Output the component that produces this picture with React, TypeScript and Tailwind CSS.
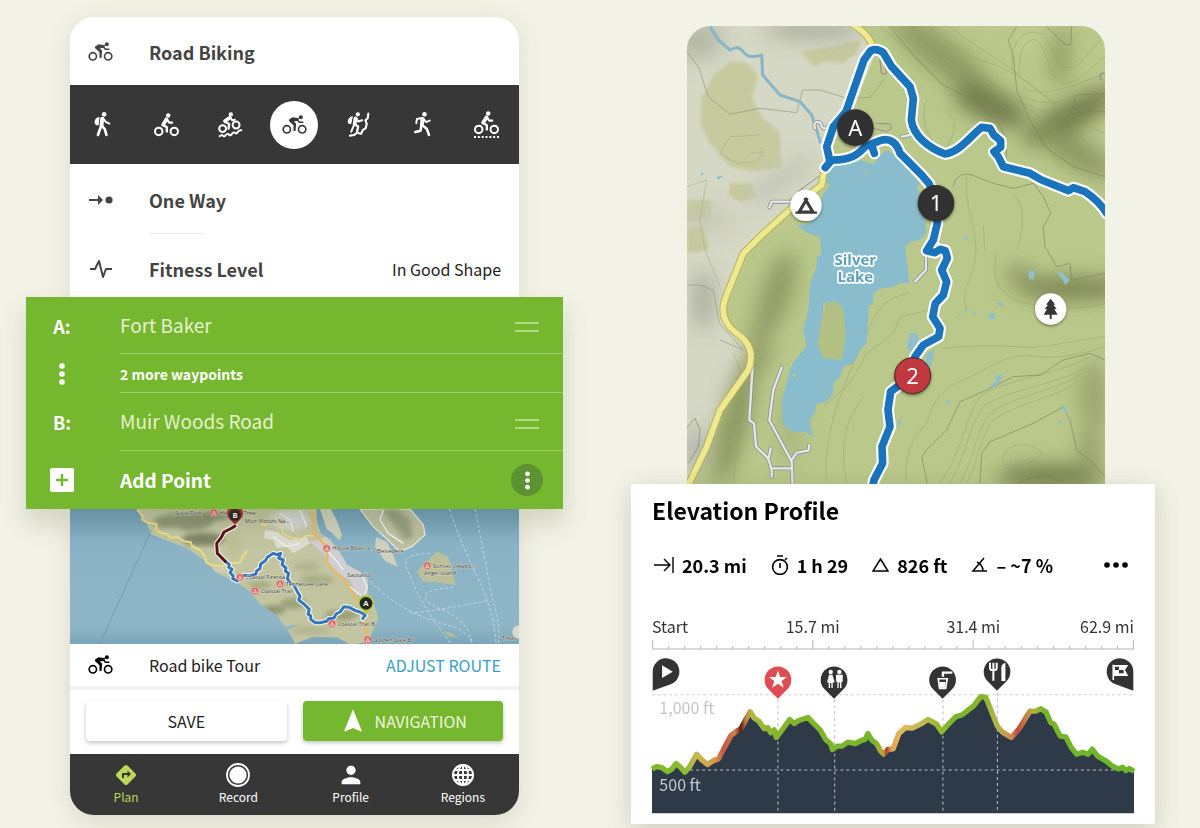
import type { ReactNode } from 'react'
import { MdDirections, MdNavigation, MdPerson } from 'react-icons/md'

interface IconProps {
  className?: string
}

/* ---------- Activity icons ---------- */

function RoadBikeIcon({ className = '' }: IconProps) {
  return (
    <svg
      viewBox="0 0 74 60"
      className={`w-[25px] h-5 ${className}`}
      fill="none"
      stroke="currentColor"
      aria-hidden="true"
    >
      <circle cx="14" cy="43" r="11" strokeWidth="5" />
      <circle cx="60" cy="43" r="11" strokeWidth="5" />
      <circle cx="56" cy="7" r="6" fill="currentColor" stroke="none" />
      <path d="M20 14 L31 7 L51 10 L48 18 L35 19 L42 26 L40 48 L34 48 L34 31 L21 19 Z" fill="currentColor" stroke="none" />
      <path d="M46 15 L52 22 H62" strokeWidth="4.5" strokeLinecap="round" strokeLinejoin="round" />
    </svg>
  )
}

function CyclistIcon({ className = '' }: IconProps) {
  return (
    <svg
      viewBox="0 0 74 70"
      className={`w-[25px] h-6 ${className}`}
      fill="none"
      stroke="currentColor"
      strokeLinecap="round"
      strokeLinejoin="round"
      aria-hidden="true"
    >
      <circle cx="14" cy="54" r="11" strokeWidth="6" />
      <circle cx="60" cy="54" r="11" strokeWidth="6" />
      <circle cx="42" cy="7" r="6.5" fill="currentColor" stroke="none" />
      <path d="M37 18 L27 34" strokeWidth="11" />
      <path d="M27 35 L38 42 V54" strokeWidth="7" />
      <path d="M39 19 L45 28 H54" strokeWidth="6" />
    </svg>
  )
}

function MountainBikeIcon() {
  return (
    <svg
      viewBox="0 0 76 78"
      className="h-[26px] w-[25px]"
      fill="none"
      stroke="currentColor"
      strokeLinecap="round"
      strokeLinejoin="round"
      aria-hidden="true"
    >
      <circle cx="14" cy="50" r="10.5" strokeWidth="6" />
      <circle cx="55" cy="39" r="10.5" strokeWidth="6" />
      <circle cx="39" cy="7" r="6.5" fill="currentColor" stroke="none" />
      <path d="M36 17 L21 27" strokeWidth="11" />
      <path d="M21 29 L34 36 L32 50" strokeWidth="7" />
      <path d="M38 16 L43 25 L51 23" strokeWidth="6" />
      <path d="M5 73 q6 -6 10 -1 q4 4 9 -3 q6 -6 10 0 q4 3 9 -4 q5 -6 9 -2 q5 4 9 -4 q4 -5 10 -4" strokeWidth="6" />
    </svg>
  )
}

function HikerIcon() {
  return (
    <svg
      viewBox="0 0 52 76"
      className="h-[25px] w-[17px]"
      fill="none"
      stroke="currentColor"
      strokeLinecap="round"
      strokeLinejoin="round"
      aria-hidden="true"
    >
      <circle cx="31" cy="7" r="7" fill="currentColor" stroke="none" />
      <path d="M17 16 C8 15 2 22 2 31 C2 39 8 42 14 40 Z" fill="currentColor" stroke="none" />
      <path d="M25 20 L23 41" strokeWidth="12" />
      <path d="M22 42 L12 70" strokeWidth="8" />
      <path d="M24 42 L33 52 L38 70" strokeWidth="8" />
      <path d="M28 19 L35 29 L47 35" strokeWidth="6" />
    </svg>
  )
}

function ClimberIcon() {
  return (
    <svg
      viewBox="0 0 70 76"
      className="h-[25px] w-[23px]"
      fill="none"
      stroke="currentColor"
      strokeLinecap="round"
      strokeLinejoin="round"
      aria-hidden="true"
    >
      <circle cx="33" cy="7" r="6.5" fill="currentColor" stroke="none" />
      <path d="M18 13 C9 13 3 20 2 31 C5 37 9 37 13 36 Z" fill="currentColor" stroke="none" />
      <path d="M26 19 L23 38" strokeWidth="11" />
      <path d="M22 38 L13 60" strokeWidth="6" />
      <path d="M24 38 L34 44 L31 58" strokeWidth="7" />
      <path d="M29 20 L34 29 L46 25" strokeWidth="6" />
      <path d="M65 5 L63 19 L56 25 L60 36 L57 49 L48 55 L43 66 L30 63 L22 70 L9 72" strokeWidth="6.5" />
    </svg>
  )
}

function RunnerIcon() {
  return (
    <svg
      viewBox="0 0 52 76"
      className="h-[25px] w-[17px]"
      fill="none"
      stroke="currentColor"
      strokeLinecap="round"
      strokeLinejoin="round"
      aria-hidden="true"
    >
      <circle cx="32" cy="7" r="7" fill="currentColor" stroke="none" />
      <path d="M26 21 L24 40" strokeWidth="12" />
      <path d="M24 18 L9 21 L7 34" strokeWidth="6" />
      <path d="M29 21 L37 31 L48 26" strokeWidth="6" />
      <path d="M26 41 L39 51 L46 70" strokeWidth="7.5" />
      <path d="M22 43 L20 57 L4 61" strokeWidth="7.5" />
    </svg>
  )
}

function GravelBikeIcon() {
  return (
    <span className="flex flex-col items-center gap-px">
      <CyclistIcon />
      <svg viewBox="0 0 75 6" className="h-[2px] w-[25px]" aria-hidden="true">
        <path d="M0 3 H75" stroke="currentColor" strokeWidth="6" strokeDasharray="6 5.5" />
      </svg>
    </span>
  )
}

function GlobeIcon() {
  return (
    <svg viewBox="0 0 24 24" className="size-6" fill="none" stroke="currentColor" strokeWidth="2" aria-hidden="true">
      <circle cx="12" cy="12" r="10" />
      <ellipse cx="12" cy="12" rx="5" ry="10" />
      <path d="M12 2 V22 M2 12 H22 M4 7 H20 M4 17 H20" />
    </svg>
  )
}

function DragHandle({ label }: { label: string }) {
  return (
    <button type="button" aria-label={label} className="flex w-6 flex-col gap-[6px] pt-1">
      <span className="h-[2px] w-full bg-[#b4d881]" />
      <span className="h-[2px] w-full bg-[#b4d881]" />
    </button>
  )
}

function Dots({ className = '' }: IconProps) {
  return (
    <svg viewBox="0 0 6 22" className={className} fill="currentColor" aria-hidden="true">
      <circle cx="3" cy="3" r="2.8" />
      <circle cx="3" cy="11" r="2.8" />
      <circle cx="3" cy="19" r="2.8" />
    </svg>
  )
}

/* ---------- Route preview map ---------- */

const previewPois = [
  { x: 462, y: 38, label: 'Heritage Tree' },
  { x: 540, y: 232, label: 'Coastal Fireroa' },
  { x: 585, y: 273, label: 'Coastal Trail' },
  { x: 660, y: 252, label: 'Tennessee Valle' },
  { x: 800, y: 145, label: 'House Boats S.' },
  { x: 816, y: 371, label: 'Coastal Trail B' },
  { x: 923, y: 419, label: 'Golden Gate Br' },
  { x: 1102, y: 197, label: 'Sunset Viewpo...' },
]

const previewRoute =
  'M496 184 L508 194 L506 202 L516 208 L510 218 L520 228 L518 236 L532 243 L540 232 L552 226 L572 227 L588 222 L590 212 L600 206 L602 192 L616 182 L622 172 L640 160 L650 164 L662 160 L656 174 L670 180 L666 194 L678 204 L676 214 L686 220 L682 236 L690 248 L702 256 L712 275 L720 288 L716 300 L732 312 L748 328 L744 342 L752 348 L752 358 L766 368 L780 368 L800 364 L806 356 L822 354 L828 342 L840 336 L852 320 L868 322 L886 332 L900 336 L916 346 L908 356'

function PreviewMap() {
  return (
    <svg
      viewBox="30 27 1347 405"
      className="block h-auto w-full font-['Open_Sans',sans-serif]"
      role="img"
      aria-label="Route from Fort Baker to Muir Woods Road"
    >
      <defs>
        <linearGradient id="sea" x1="0" y1="0" x2="0" y2="1">
          <stop offset="0" stopColor="#6f9fb8" />
          <stop offset="0.25" stopColor="#8ab3c5" />
          <stop offset="0.85" stopColor="#8fb6c6" />
          <stop offset="1" stopColor="#7ba6b8" />
        </linearGradient>
        <filter id="soft">
          <feGaussianBlur stdDeviation="8" />
        </filter>
        <clipPath id="mainland">
          <path d="M228 27 L262 72 L272 102 L310 118 L382 145 L430 180 L470 218 L530 246 L572 276 L600 312 L650 346 L680 385 L706 432 L720 425 L760 410 L830 412 L872 434 L925 425 L955 355 L940 305 L922 285 L924 240 L900 215 L862 195 L836 150 L810 118 L782 100 L770 60 L770 27 Z" />
        </clipPath>
      </defs>
      <rect x="30" y="27" width="1347" height="407" fill="url(#sea)" />
      <g clipPath="url(#mainland)">
        <rect x="220" y="20" width="750" height="420" fill="#c2c5a0" />
        <g filter="url(#soft)">
          <ellipse cx="370" cy="66" rx="90" ry="26" fill="#8f9678" />
          <ellipse cx="330" cy="92" rx="40" ry="8" fill="#c3c6a6" />
          <ellipse cx="430" cy="118" rx="64" ry="20" fill="#7f8769" />
          <ellipse cx="440" cy="50" rx="70" ry="14" fill="#8b9272" />
          <ellipse cx="520" cy="130" rx="24" ry="44" fill="#bdc197" />
          <ellipse cx="700" cy="310" rx="40" ry="16" fill="#9ca07a" />
          <ellipse cx="640" cy="330" rx="36" ry="14" fill="#8f9572" />
          <ellipse cx="600" cy="255" rx="34" ry="10" fill="#a3a880" />
          <ellipse cx="845" cy="345" rx="50" ry="16" fill="#9ba078" />
          <ellipse cx="770" cy="240" rx="50" ry="16" fill="#a9ae85" />
          <ellipse cx="740" cy="200" rx="40" ry="14" fill="#b1b58c" />
          <ellipse cx="750" cy="392" rx="60" ry="10" fill="#b0b38e" />
          <ellipse cx="690" cy="60" rx="60" ry="30" fill="#d3d6cf" />
          <ellipse cx="480" cy="208" rx="30" ry="9" fill="#cfd0bd" />
        </g>
        <path d="M615 90 L650 95 L690 120 L740 110 L750 130 L700 160 L680 140 L650 145 L640 120 L612 115 Z" fill="#dcdcd0" />
        <path d="M750 125 L800 110 L850 170 L920 215 L925 285 L890 285 L870 240 L820 210 L790 160 Z" fill="#cfced3" />
        <path d="M650 385 L720 372 L680 392 Z" fill="#8fb6c6" />
      </g>
      {/* Peninsulas and islands */}
      <path d="M780 27 L812 27 L830 60 L846 105 L838 122 L818 100 L800 88 Z" fill="#cfd1bc" />
      <path d="M900 27 L1050 27 L1090 75 L1095 105 L1055 140 L1020 155 L975 112 L940 80 Z" fill="#bdc1a4" stroke="#e3e5dc" strokeWidth="4" />
      <path d="M965 27 L1010 27 L1050 60 L1060 110 L1035 120 Z" fill="#989f80" filter="url(#soft)" />
      <path d="M948 112 L980 125 L1000 165 L1012 200 L975 182 L945 140 Z" fill="#cfd1bc" />
      <path d="M1130 155 L1165 170 L1178 215 L1188 256 L1140 248 L1090 245 L1070 215 L1095 190 Z" fill="#bcc09a" />
      <path d="M1155 393 l20 6 l14 14 l-24 -5 Z" fill="#b7bc9b" />
      <circle cx="1377" cy="396" r="20" fill="#d9d9cf" />
      {/* Ferry lines */}
      <g fill="none" stroke="#c2dbe6" strokeWidth="3" strokeDasharray="10 6" opacity="0.85">
        <path d="M1168 27 C1200 120 1230 190 1262 250 C1290 320 1305 370 1308 432" />
        <path d="M1245 27 C1262 110 1280 210 1296 290 C1315 350 1318 390 1316 432" />
        <path d="M1110 160 C1020 165 1030 180 1055 240 C1090 330 1140 380 1172 432" />
        <path d="M930 245 C1000 310 1060 350 1180 380 C1215 395 1230 410 1238 432" />
        <path d="M1180 262 C1060 270 1080 305 1160 335 C1220 365 1230 400 1236 425" />
        <path d="M1050 340 C1150 330 1230 310 1285 303" />
      </g>
      <path d="M275 88 L118 434" stroke="#6f909d" strokeWidth="2" />
      {/* Roads */}
      <g fill="none" strokeLinejoin="round">
        <path d="M232 30 L248 48 L246 58 L262 68 L290 72 L288 88 L304 100 L322 102 L332 114 L350 110 L372 124 L392 126 L396 138 L420 150 L434 168 L440 188 L456 196 L490 198 L510 190 L540 188 L548 170 L562 152" stroke="#e8dc88" strokeWidth="6" />
        <path d="M600 72 L620 76 L624 64 L645 68 L665 70 L668 100 L690 112 L720 118 L742 106 L765 108 L800 130" stroke="#ead98a" strokeWidth="5" />
        <path d="M758 27 L760 100 L800 140 L802 190 L850 240 L882 285 L915 335 L920 430" stroke="#e8b96b" strokeWidth="7" />
        <path d="M660 40 L690 60 L700 95 M720 30 L740 80 M870 260 L920 300 M640 110 L680 140 L720 130 M905 225 L922 262 L912 284 M800 150 L836 190 L850 210 M970 30 L960 60 L985 100 L1030 130" stroke="#f0f0ec" strokeWidth="4" />
      </g>
      {/* Route */}
      <g fill="none" strokeLinejoin="round" strokeLinecap="round">
        <path d="M525 78 L516 84 L492 96 L484 112 L470 130 L472 160 L496 184" stroke="#fff" strokeWidth="15" />
        <path d={previewRoute} stroke="#fff" strokeWidth="15" />
        <path d={previewRoute} stroke="#3576b8" strokeWidth="9" />
        <path d="M525 78 L516 84 L492 96 L484 112 L470 130 L472 160 L496 184" stroke="#5e1119" strokeWidth="9" />
      </g>
      {previewPois.map((poi) => (
        <g key={poi.label}>
          <circle cx={poi.x} cy={poi.y} r="11" fill="#d9635f" stroke="#f0b4ad" strokeWidth="2" />
          <path d={`M${poi.x - 5} ${poi.y + 5} l5 -10 l5 10 Z`} fill="none" stroke="#fff" strokeWidth="2" />
          <text x={poi.x + 17} y={poi.y + 6} fontSize="17" fill="#33332e" stroke="#e8e8dc" strokeWidth="2" paintOrder="stroke">
            {poi.label}
          </text>
        </g>
      ))}
      <g fontSize="17" fill="#33332e" stroke="#e8e8dc" strokeWidth="2" paintOrder="stroke">
        <text x="952" y="160">Belvedere</text>
        <text x="862" y="232">Sausalito</text>
        <text x="1092" y="226">Angel Island</text>
        <text x="1326" y="421">Treas</text>
        <text x="345" y="44">State Park</text>
        <text x="554" y="68">Muir Woods Na...</text>
      </g>
      <path d="M525 74 L509 58 A24 24 0 1 1 541 58 Z" fill="#a82f30" />
      <circle cx="525" cy="45" r="18" fill="#2f2726" />
      <path d="M918 345 L902 326 A24 24 0 1 1 934 326 Z" fill="#b9c94a" />
      <circle cx="918" cy="310" r="19" fill="#22261f" />
      <g fill="#fff" fontSize="23" fontWeight="700" textAnchor="middle">
        <text x="525" y="53">B</text>
        <text x="918" y="318">A</text>
      </g>
    </svg>
  )
}

/* ---------- Silver Lake map ---------- */

const routePaths = [
  'M436 443 L455 420 C510 420 535 405 555 380 L600 362 C630 352 650 368 660 400 L690 430 L725 465 L748 492 L768 550 L772 610 L760 660 L740 692 L765 698 L780 688 L796 692 L802 715 L785 750 L800 785 L790 825 L766 850 L758 890 L780 925 L776 950 L730 975 L705 1010 L698 1065 L632 1115 L624 1170 L630 1220 L606 1280 L608 1330 L582 1380 L578 1400',
  'M450 425 L440 380 L460 320 L498 275 L552 120 L572 92 Q590 84 610 98 L635 140 L690 200 L700 235 L694 300 C700 350 750 385 795 402 C840 395 870 350 905 322 L930 325 L942 346 L962 362 L962 382 L942 395 L955 410 L970 440 L1050 460 L1085 480 L1165 512 L1180 503 L1215 515 C1245 535 1265 555 1280 580',
  'M575 375 L583 400',
]

const tracks =
  'M218 1035 L208 1200 L222 1210 L228 1280 L265 1315 L275 1350 L275 1370 M305 1042 L280 1110 L268 1200 L300 1260 L335 1325 L338 1400 M275 1345 L335 1345 M335 1320 L350 1298 L385 1292 L388 1275 M272 1285 L265 1320 M268 562 L275 545 L330 545 M405 325 C395 300 425 300 425 320 C440 340 450 300 470 300 M738 710 L738 750 L705 785 M665 350 L690 345'

const mainRoad =
  'M515 10 C560 40 575 60 580 95 M434 445 L425 495 L340 560 L240 650 L190 700 L140 825 C120 870 130 910 170 940 C215 970 220 1010 205 1050 L120 1170 L80 1280 L25 1395'

function LakeMap() {
  return (
    <svg
      viewBox="21 18 1254 1374"
      className="block h-auto w-full font-['Noto_Sans',sans-serif]"
      role="img"
      aria-label="Route around Silver Lake"
    >
      <defs>
        <filter id="hill" x="-50%" y="-50%" width="200%" height="200%">
          <feGaussianBlur stdDeviation="28" />
        </filter>
        <filter id="meadow">
          <feGaussianBlur stdDeviation="4" />
        </filter>
        <filter id="pinShadow" x="-30%" y="-30%" width="160%" height="160%">
          <feDropShadow dx="0" dy="4" stdDeviation="4" floodOpacity="0.45" />
        </filter>
      </defs>
      <rect x="0" y="0" width="1300" height="1420" fill="#bac88b" />
      {/* Open land in the west */}
      <path d="M0 0 L520 0 L590 90 L520 270 L430 420 L440 470 L340 560 L200 690 L130 850 L150 920 L215 1000 L200 1060 L120 1180 L20 1400 L0 1400 Z" fill="#d5d8c4" />
      <g fill="#c5cb9f" filter="url(#meadow)">
        <path d="M100 165 L150 125 L205 130 L235 170 L215 235 L245 290 L300 340 L305 440 L230 455 L150 440 L90 370 L60 310 L65 235 Z" />
        <path d="M360 95 L450 80 L545 60 L530 100 L490 130 L430 125 L405 140 Z" />
        <path d="M150 490 L215 490 L230 530 L180 545 L145 525 Z" />
        <path d="M20 540 L95 540 L90 590 L20 610 Z" />
        <path d="M20 625 L70 620 L90 690 L20 700 Z" />
      </g>
      <g filter="url(#hill)">
        <ellipse cx="400" cy="28" rx="150" ry="24" fill="#a3a697" />
        <ellipse cx="50" cy="60" rx="80" ry="60" fill="#b6b9a6" />
        <ellipse cx="300" cy="480" rx="120" ry="26" fill="#c0c3b2" transform="rotate(-35 300 480)" />
        <ellipse cx="80" cy="600" rx="80" ry="30" fill="#c3c6b0" />
        <ellipse cx="70" cy="840" rx="30" ry="90" fill="#a8ab9b" />
        <ellipse cx="45" cy="1290" rx="30" ry="70" fill="#aeb0a6" />
        <ellipse cx="790" cy="110" rx="190" ry="52" fill="#8f9b63" transform="rotate(38 790 110)" />
        <ellipse cx="930" cy="255" rx="120" ry="50" fill="#737e4d" transform="rotate(25 930 255)" />
        <ellipse cx="1140" cy="110" rx="34" ry="90" fill="#96a169" />
        <ellipse cx="1060" cy="60" rx="50" ry="24" fill="#c3cf92" />
        <ellipse cx="1170" cy="290" rx="160" ry="44" fill="#727c4b" transform="rotate(-30 1170 290)" />
        <ellipse cx="1190" cy="400" rx="130" ry="44" fill="#8c9860" transform="rotate(30 1190 400)" />
        <ellipse cx="1180" cy="805" rx="170" ry="36" fill="#7b8653" />
        <ellipse cx="1020" cy="770" rx="46" ry="36" fill="#919c65" />
        <ellipse cx="1240" cy="1130" rx="44" ry="110" fill="#9ba66e" />
        <ellipse cx="1110" cy="1370" rx="160" ry="40" fill="#7a8553" />
        <ellipse cx="1230" cy="1290" rx="40" ry="60" fill="#98a36c" />
        <ellipse cx="290" cy="820" rx="46" ry="130" fill="#909c66" transform="rotate(18 290 820)" />
        <ellipse cx="165" cy="1200" rx="38" ry="200" fill="#88945f" transform="rotate(14 165 1200)" />
        <ellipse cx="240" cy="970" rx="34" ry="90" fill="#939f69" />
        <ellipse cx="330" cy="1220" rx="30" ry="120" fill="#a9b57a" />
      </g>
      {/* Contour lines */}
      <g fill="none" stroke="#8f9a65" strokeWidth="2" opacity="0.55">
        <path d="M600 20 C680 80 740 150 800 210 S950 290 985 400" />
        <path d="M640 20 C700 90 800 160 850 190 S1040 280 1130 420" />
        <path d="M690 20 C740 80 800 120 880 160 S1080 260 1180 420" />
        <path d="M750 20 C800 70 860 110 930 130 S1110 220 1230 380" />
        <path d="M810 20 C860 60 910 90 970 130 S1150 280 1270 340" />
        <path d="M1000 160 C980 80 1030 20 1080 40 C1130 70 1120 180 1200 130 L1260 60" />
        <path d="M1020 170 C1010 90 1040 50 1070 60 C1110 90 1100 190 1160 190 C1210 180 1240 130 1275 110" />
        <path d="M1030 200 C1060 230 1130 220 1275 160" />
        <path d="M1040 230 C1080 260 1160 250 1275 205" />
        <path d="M1050 255 C1100 290 1180 290 1275 240" />
        <path d="M1275 950 C1180 960 1080 990 1010 980 C900 975 840 980 790 985" />
        <path d="M1275 980 C1180 1010 1110 1020 1040 1005 C960 1010 900 1060 840 1085 C770 1110 750 1180 740 1210 C690 1260 670 1320 680 1390" />
        <path d="M1230 1010 C1150 1060 960 1080 900 1130 C860 1180 850 1290 780 1390" />
        <path d="M1220 1040 C1150 1090 970 1110 910 1160 C870 1210 860 1300 810 1390" />
        <path d="M1205 1060 C1140 1110 990 1130 930 1180 C890 1230 880 1320 840 1390" />
        <path d="M1190 1085 C1140 1130 1010 1150 940 1200 C900 1250 890 1340 860 1390" />
        <path d="M980 1290 C1000 1270 1060 1265 1085 1300 C1060 1340 980 1350 965 1320 Z" />
        <path d="M690 820 C620 830 590 870 570 920 C540 1000 420 1200 440 1390" />
        <path d="M750 870 L660 890 L640 940 L560 1000 L510 1090 L430 1160" />
        <path d="M860 470 C850 560 900 640 885 720 S840 800 860 880" />
        <path d="M1000 520 C1040 570 1030 630 1010 690 M910 620 L915 690 M800 270 C830 300 830 340 800 380 M740 240 C720 300 740 330 760 370" />
        <path d="M950 700 C930 780 960 830 1040 850 C1140 870 1200 870 1275 850" />
        <path d="M160 1000 C210 1090 180 1200 160 1390 M550 1130 C490 1210 480 1290 500 1390" />
        <path d="M60 600 L75 690 L120 800 M20 500 L80 480 L60 600" />
        <path d="M210 400 L250 395 L230 425 L170 430 L120 400 L150 350 L240 345" />
      </g>
      <g fill="none" stroke="#7d8459" strokeWidth="2.5" opacity="0.75" strokeLinejoin="round">
        <path d="M630 20 L700 105 L790 195 L880 240 L950 300 L975 350 L980 415" />
        <path d="M1010 20 L985 60 L1000 110 L1010 210 L1050 300 L1095 380 L1180 440 L1275 470" />
        <path d="M1100 20 L1150 70 L1172 75 L1175 20 M1275 220 L1190 225 L1180 250 L1230 275 L1275 275" />
        <path d="M820 500 C830 450 870 460 900 475 L940 490 L1000 505 L1060 490 L1090 530 L1112 580 L1090 620 L1095 680 L1130 740 L1170 730 L1175 780 L1275 760" />
        <path d="M1275 1020 L1230 1000 L1150 1020 L1080 1065 L1000 1070 L920 1110 L840 1145 L800 1230 L740 1290 L725 1310 L742 1390" />
        <path d="M900 1390 L905 1300 L930 1265 L1060 1210 L1150 1160 L1170 1200 L1190 1290 L1240 1330 L1275 1370" />
        <path d="M1010 1390 L1060 1370 L1120 1370 L1150 1385" />
        <path d="M20 95 L55 140 L85 230 L150 283 L240 265 L350 278 L368 210 L420 210 L500 235" stroke="#8f917c" />
        <path d="M505 235 L570 232 L615 175 M20 795 L60 795 L100 810 L118 910 L190 990 L120 960" stroke="#96987f" />
        <path d="M20 1225 L45 1195 L60 1230 L55 1280 L25 1330" />
      </g>
      {/* Stream */}
      <path d="M90 20 L115 60 L150 90 Q175 74 190 96 T245 105 L248 165 L300 225 L360 245 L395 285 L410 330 L422 370" fill="none" stroke="#86b6c8" strokeWidth="9" strokeLinejoin="round" />
      {/* Lake */}
      <path
        d="M440 455 L470 430 L540 420 L580 432 L610 396 L625 390 L636 402 L650 400 L656 420 L680 440 L700 470 L720 490 L710 505 L722 520 L740 545 L735 600 L738 640 L720 660 L690 665 L676 680 L688 790 L660 788 L640 800 L600 806 L580 820 L578 850 L565 860 L565 890 L560 970 L540 990 L520 1030 L490 1040 L480 1070 L460 1090 L460 1120 L440 1145 L410 1150 L404 1180 L388 1200 L398 1252 L375 1235 L340 1235 L310 1215 L305 1150 L330 1050 L345 1020 L380 980 L370 930 L385 870 L390 790 L410 740 L410 715 L425 700 L420 650 L384 640 L350 615 L380 614 L400 600 L420 560 L430 520 L450 495 L430 480 Z"
        fill="#89bccc"
      />
      <path d="M430 870 C440 840 475 835 490 870 L497 950 L485 1020 L430 1015 L412 970 Z" fill="#b2c083" />
      <path d="M430 850 L440 845 L430 880 Z M540 455 L560 462 L575 452 L560 466 Z M335 1060 l14 4 l-6 12 Z" fill="#b9c789" />
      <g fill="#8fbfca">
        <path d="M690 940 l20 0 l10 30 l-20 30 l-20 -15 Z M740 1000 l24 -12 l-10 50 l-18 -5 Z M655 1195 l10 16 l-10 10 Z" />
        <path d="M1045 750 l20 5 l-5 25 l-14 -5 Z M1128 755 l20 5 l22 20 l-14 14 l-12 -20 Z M925 885 l16 -6 l6 16 l-16 4 Z M950 850 l20 -4 l-8 16 Z" />
        <path d="M945 1068 l22 -6 l-6 24 l-24 18 l-6 -10 l18 -10 Z M1145 1165 l14 -8 l2 28 Z M1130 1205 l14 -4 l-4 12 Z M800 1140 l14 4 l-8 10 Z" />
        <path d="M860 860 l10 4 l-10 10 Z M838 878 l8 4 l-10 6 Z M880 875 l12 6 l-12 6 Z M848 658 l16 -10 l-4 12 Z M110 470 l22 -4 l-18 14 Z M62 456 l12 6 l-10 4 Z" />
      </g>
      {/* Small tracks */}
      <g fill="none" stroke="#8e9298" strokeLinejoin="round" strokeLinecap="round">
        <path d={tracks} strokeWidth="12" />
        <path d={tracks} stroke="#e7e7e3" strokeWidth="7" />
        <path d="M330 540 L360 510 L415 470 M590 310 L630 312 L635 325 L620 335 L580 325" strokeWidth="3" />
        <path d="M600 120 l4 38 q8 10 16 0 l-4 -14" stroke="#b08a86" strokeWidth="4" />
        <path d="M1275 160 q-20 -4 -12 20" strokeWidth="4" />
      </g>
      {/* Main road */}
      <g fill="none" strokeLinejoin="round">
        <path d={mainRoad} stroke="#b9b157" strokeWidth="23" />
        <path d={mainRoad} stroke="#ede990" strokeWidth="17" />
      </g>
      {/* Route */}
      <g fill="none" strokeLinejoin="round" strokeLinecap="round">
        {routePaths.map((d) => (
          <path key={d} d={d} stroke="#fff" strokeWidth="36" />
        ))}
        {routePaths.map((d) => (
          <path key={d} d={d} stroke="#1a74bb" strokeWidth="23" />
        ))}
      </g>
      <g
        fontFamily="Open Sans, sans-serif"
        fontSize="45"
        fontWeight="700"
        textAnchor="middle"
        fill="#5b9fbc"
        stroke="#fff"
        strokeWidth="10"
        strokeLinejoin="round"
        paintOrder="stroke"
      >
        <text x="526" y="734">Silver</text>
        <text x="526" y="787">Lake</text>
      </g>
      {/* Markers */}
      <g filter="url(#pinShadow)">
        <circle cx="526" cy="323" r="55" fill="#333" />
        <circle cx="768" cy="550" r="55" fill="#333" />
        <circle cx="698" cy="1067" r="54" fill="#c03740" stroke="#3a2a28" strokeWidth="3" />
        <circle cx="378" cy="556" r="47" fill="#fff" />
        <circle cx="1112" cy="867" r="47" fill="#fff" />
      </g>
      <g fill="#fff" fontSize="66" textAnchor="middle">
        <text x="526" y="347">A</text>
        <text x="768" y="574">1</text>
        <text x="698" y="1091">2</text>
      </g>
      <path d="M378 542 L398 575 H358 Z M346 578 H411" fill="none" stroke="#3b3b3b" strokeWidth="7" />
      <path d="M382 534 L356 578 M374 534 L400 578" stroke="#3b3b3b" strokeWidth="9" />
      <path
        d="M1112 836 L1126 854 H1120 L1130 867 H1123 L1133 884 H1115 V897 H1109 V884 H1091 L1101 867 H1094 L1104 854 H1098 Z"
        fill="#33373a"
      />
    </svg>
  )
}

/* ---------- Elevation chart ---------- */

const profile =
  'M36 358 L50 351 L65 354 L82 366 L95 359 L108 342 L122 354 L134 368 L148 352 L170 314 L185 331 L202 345 L218 334 L235 328 L255 290 L272 258 L290 244 L302 238 L318 208 L330 187 L342 206 L356 215 L372 238 L382 234 L392 250 L402 241 L408 264 L422 246 L448 210 L462 222 L475 213 L503 204 L520 222 L540 242 L556 270 L572 284 L576 300 L590 290 L605 290 L622 278 L645 282 L665 272 L674 270 L682 252 L694 272 L708 282 L720 304 L730 314 L742 300 L758 298 L775 252 L795 234 L815 236 L840 224 L862 210 L888 224 L903 247 L920 228 L945 202 L965 196 L1000 168 L1020 142 L1035 143 L1050 180 L1070 230 L1085 248 L1112 264 L1135 238 L1155 205 L1168 185 L1185 185 L1200 178 L1216 188 L1230 220 L1240 224 L1258 260 L1275 262 L1290 292 L1307 314 L1325 308 L1342 314 L1354 299 L1370 320 L1395 334 L1415 350 L1432 358 L1445 353 L1455 363 L1465 357 L1479 366'

const gradeStops = [
  { at: 36, color: '#7db928' },
  { at: 134, color: '#8dbb34' },
  { at: 170, color: '#c9b650' },
  { at: 225, color: '#d69a4c' },
  { at: 250, color: '#c9544a' },
  { at: 285, color: '#d08048' },
  { at: 302, color: '#5a1a12' },
  { at: 316, color: '#c27a48' },
  { at: 332, color: '#b3b93e' },
  { at: 400, color: '#86b52f' },
  { at: 700, color: '#76b52a' },
  { at: 728, color: '#c0a23c' },
  { at: 738, color: '#a8402c' },
  { at: 752, color: '#e0a050' },
  { at: 780, color: '#e3b95b' },
  { at: 862, color: '#b5b94d' },
  { at: 903, color: '#8fb92a' },
  { at: 940, color: '#76b52a' },
  { at: 1030, color: '#8ab52f' },
  { at: 1070, color: '#b3b34d' },
  { at: 1112, color: '#d68a4f' },
  { at: 1130, color: '#c24a44' },
  { at: 1155, color: '#c77d45' },
  { at: 1175, color: '#b0b53a' },
  { at: 1210, color: '#76b52a' },
  { at: 1479, color: '#6cb52a' },
]

function Pin({ x, y, color = '#333', children }: { x: number; y: number; color?: string; children: ReactNode }) {
  return (
    <g transform={`translate(${x} ${y})`}>
      <path d="M0 57 L-29 28 A40 40 0 1 1 29 28 Z" fill={color} />
      {children}
    </g>
  )
}

function ElevationChart() {
  return (
    <svg
      viewBox="36 20 1443 471"
      className="block h-auto w-full overflow-visible font-['Noto_Sans_CJK_JP','Noto_Sans',sans-serif]"
      role="img"
      aria-label="Elevation from 500 to 1,000 feet along the tour"
    >
      <defs>
        <linearGradient id="grade" gradientUnits="userSpaceOnUse" x1="36" y1="0" x2="1479" y2="0">
          {gradeStops.map((stop) => (
            <stop key={stop.at} offset={(stop.at - 36) / 1443} stopColor={stop.color} />
          ))}
        </linearGradient>
      </defs>
      <path d={`${profile} V491 H36 Z`} fill="#2e3a48" />
      <path d="M36 136 H1479" stroke="#cfcfcf" strokeWidth="3" strokeDasharray="9 8" />
      <g stroke="#b9bec4" strokeWidth="3" strokeDasharray="9 9">
        <path d="M150 361 H1420" />
        <path d="M413 150 V491" />
        <path d="M583 150 V491" />
        <path d="M907 150 V491" />
        <path d="M1070 130 V491" />
      </g>
      <path d={profile} fill="none" stroke="url(#grade)" strokeWidth="16" strokeLinejoin="round" />
      <text x="58" y="195" fontSize="48" fill="#c4c4c4">
        1,000 ft
      </text>
      <text x="58" y="423" fontSize="48" fill="#c3c8cd">
        500 ft
      </text>

      {/* Start and finish flags lean into the chart */}
      <path d="M38 124 L38 67 A40 40 0 1 1 90 105 Z" fill="#333" />
      <path d="M66 48 L98 67 L66 86 Z" fill="#fff" />
      <path d="M1477 124 L1477 67 A40 40 0 1 0 1422 104 Z" fill="#333" />
      <path d="M1417 46 V92" stroke="#fff" strokeWidth="5" />
      <path d="M1417 47 H1462 L1452 62 L1462 80 H1417 Z" fill="#fff" />
      <path d="M1422 52 H1434 V62 H1422 Z M1434 62 H1448 V72 H1434 Z" fill="#333" />

      <Pin x={413} y={91} color="#df4c52">
        <path d="M0 -27 L7 -8 H27 L11 4 L17 24 L0 12 L-17 24 L-11 4 L-27 -8 H-7 Z" fill="#fff" />
      </Pin>
      <Pin x={581} y={91}>
        <g fill="#fff">
          <circle cx="-10" cy="-23" r="6.5" />
          <circle cx="16" cy="-23" r="6.5" />
          <path d="M-15 -15 H-5 L2 8 H-4 V25 H-8 V10 H-12 V25 H-16 V8 H-21 Z" />
          <path d="M6 -15 H26 V6 H22 V25 H18 V8 H14 V25 H10 V6 H6 Z" />
        </g>
      </Pin>
      <Pin x={906} y={91}>
        <path d="M1 -9 V-21 H29" fill="none" stroke="#fff" strokeWidth="7" />
        <path d="M-13 -3 H14 L9 26 H-9 Z" fill="none" stroke="#fff" strokeWidth="5" />
        <path d="M-9 7 H9 L7 24 H-7 Z" fill="#fff" />
      </Pin>
      <Pin x={1069} y={67}>
        <path d="M-21 -27 V-10 Q-21 -4 -11 -4 Q-1 -4 -1 -10 V-27 M-11 -27 V27" fill="none" stroke="#fff" strokeWidth="6" />
        <path d="M13 28 V-2 Q10 -24 25 -27 V28 Z" fill="#fff" />
      </Pin>
    </svg>
  )
}

function Ruler() {
  return (
    <svg viewBox="0 0 481 10" className="mt-[2px] block h-auto w-full" stroke="#b5b5b5" aria-hidden="true">
      {Array.from({ length: 31 }, (_, i) => (
        <path key={i} d={`M${0.5 + i * 16} ${i % 10 === 0 ? 0 : 6} V9`} />
      ))}
      <path d="M0 9 H481" />
    </svg>
  )
}

/* ---------- Page ---------- */

const activities = [
  { name: 'Hiking', icon: <HikerIcon /> },
  { name: 'Cycling', icon: <CyclistIcon /> },
  { name: 'Mountain Biking', icon: <MountainBikeIcon /> },
  { name: 'Road Biking', icon: <RoadBikeIcon />, active: true },
  { name: 'Mountaineering', icon: <ClimberIcon /> },
  { name: 'Running', icon: <RunnerIcon /> },
  { name: 'Gravel Biking', icon: <GravelBikeIcon /> },
]

const tabs = [
  { name: 'Plan', icon: <MdDirections className="size-6" />, active: true },
  {
    name: 'Record',
    icon: (
      <svg viewBox="0 0 24 24" className="size-6" aria-hidden="true">
        <circle cx="12" cy="12" r="11" fill="none" stroke="currentColor" strokeWidth="1.8" />
        <circle cx="12" cy="12" r="8.6" fill="currentColor" />
      </svg>
    ),
  },
  { name: 'Profile', icon: <MdPerson className="size-7" /> },
  { name: 'Regions', icon: <GlobeIcon /> },
]

function Planner() {
  return (
    <section className="flex flex-col">
      <div className="mx-11 rounded-t-3xl bg-white shadow-[0_4px_24px_rgba(80,80,50,0.12)]">
        <header className="flex h-[68px] items-center pt-[2px] pl-[18px] text-[#444]">
          <span className="w-[61px]">
            <RoadBikeIcon />
          </span>
          <h1 className="text-lg font-bold">Road Biking</h1>
        </header>

        <div className="grid h-[79px] grid-cols-7 items-center justify-items-center bg-[#373737] text-white">
          {activities.map((activity) => (
            <button
              key={activity.name}
              type="button"
              aria-label={activity.name}
              className={`flex size-12 items-center justify-center rounded-full ${
                activity.active ? 'bg-white text-[#373737]' : ''
              }`}
            >
              {activity.icon}
            </button>
          ))}
        </div>

        <div className="flex h-[69px] items-center pt-[2px] pl-[18px] text-[#444]">
          <span className="w-[61px]">
            <svg viewBox="0 0 25 12" className="h-3 w-[25px]" aria-hidden="true">
              <path d="M1 6 H13" stroke="currentColor" strokeWidth="2" />
              <path d="M10 1 L15 6 L10 11 Z" fill="currentColor" />
              <circle cx="21" cy="6" r="3.6" fill="currentColor" />
            </svg>
          </span>
          <span className="text-lg font-bold">One Way</span>
        </div>
        <div className="ml-[79px] w-[55px] border-b border-[#e6e6e6]" />
        <div className="flex h-[63px] items-center pt-[6px] pl-[18px] pr-[18px] text-[#444]">
          <span className="w-[61px]">
            <svg viewBox="0 0 25 20" className="h-5 w-[25px]" aria-hidden="true">
              <path d="M2 10 H7 L11 2 L15 18 L18 10 H24" fill="none" stroke="currentColor" strokeWidth="2" strokeLinejoin="round" />
            </svg>
          </span>
          <span className="text-lg font-bold">Fitness Level</span>
          <span className="ml-auto text-base text-[#222]">In Good Shape</span>
        </div>
      </div>

      {/* Waypoints */}
      <div className="z-10 bg-[#75b72e] text-white shadow-[0_14px_24px_rgba(60,70,40,0.18)]">
        <div className="flex h-[57px]">
          <span className="flex w-[72px] items-center justify-center text-lg font-bold">A:</span>
          <div className="ml-[22px] flex flex-1 items-center justify-between border-b border-[#9fcd68] pr-6">
            <span className="text-[19px] text-[#e6f1cf]">Fort Baker</span>
            <DragHandle label="Move Fort Baker" />
          </div>
        </div>
        <div className="flex h-[39px]">
          <span className="flex w-[72px] items-center justify-center">
            <Dots className="h-[22px] w-[6px]" />
          </span>
          <div className="ml-[22px] flex flex-1 items-center border-b border-[#9fcd68]">
            <button type="button" className="pt-[2px] text-sm font-bold">
              2 more waypoints
            </button>
          </div>
        </div>
        <div className="flex h-[58px]">
          <span className="flex w-[72px] items-center justify-center text-lg font-bold">B:</span>
          <div className="ml-[22px] flex flex-1 items-center justify-between border-b border-[#9fcd68] pr-6">
            <span className="text-[19px] text-[#e6f1cf]">Muir Woods Road</span>
            <DragHandle label="Move Muir Woods Road" />
          </div>
        </div>
        <div className="flex h-[58px] items-center pr-5">
          <span className="flex w-[72px] justify-center">
            <svg viewBox="0 0 24 24" className="size-6" aria-hidden="true">
              <rect width="24" height="24" rx="2" fill="#fff" />
              <path d="M12 6 V18 M6 12 H18" stroke="#75b72e" strokeWidth="2.4" />
            </svg>
          </span>
          <button type="button" className="ml-[22px] text-[19px] font-bold">
            Add Point
          </button>
          <button
            type="button"
            aria-label="More options"
            className="ml-auto flex size-8 items-center justify-center rounded-full bg-[#5c9332]"
          >
            <Dots className="h-[19px] w-[5px]" />
          </button>
        </div>
      </div>

      <div className="mx-11 overflow-hidden rounded-b-3xl bg-white shadow-[0_8px_24px_rgba(80,80,50,0.14)]">
        <PreviewMap />
        <div className="flex h-[46px] items-center border-b-4 border-[#f2f2f2] px-[18px]">
          <span className="w-[61px] text-black">
            <RoadBikeIcon />
          </span>
          <span className="text-base text-[#222]">Road bike Tour</span>
          <button type="button" className="ml-auto text-base text-[#359fc9]">
            ADJUST ROUTE
          </button>
        </div>
        <div className="grid grid-cols-2 gap-4 px-4 pt-[11px] pb-[13px]">
          <button type="button" className="h-10 rounded-sm bg-white text-base text-[#222] shadow-[0_2px_4px_rgba(0,0,0,0.24)]">
            SAVE
          </button>
          <button
            type="button"
            className="flex h-10 items-center justify-center gap-2 rounded-sm bg-[#75b72e] text-base text-[#eef6dc] shadow-[0_2px_4px_rgba(0,0,0,0.24)]"
          >
            <MdNavigation className="size-7 text-white" />
            NAVIGATION
          </button>
        </div>
        <nav className="grid h-[61px] grid-cols-4 bg-[#373737] text-white">
          {tabs.map((tab) => (
            <a
              key={tab.name}
              href="#"
              className={`flex flex-col items-center pt-[7px] text-xs ${tab.active ? 'text-[#bdd75b]' : ''}`}
            >
              <span className="flex h-7 items-center">{tab.icon}</span>
              {tab.name}
            </a>
          ))}
        </nav>
      </div>
    </section>
  )
}

function TourDetails() {
  return (
    <section className="flex flex-col pt-[9px]">
      <div className="ml-14 mr-[50px] overflow-hidden rounded-t-3xl">
        <LakeMap />
      </div>
      <div className="z-10 bg-white px-[21px] pt-[10px] pb-[11px] text-black shadow-[0_6px_24px_rgba(60,60,40,0.2)]">
        <h2 className="text-[23px] leading-8 font-bold">Elevation Profile</h2>

        <div className="mt-[25px] flex h-7 items-center gap-6 text-lg font-bold">
          <span className="flex items-center gap-2">
            <svg viewBox="0 0 22 18" className="h-[18px] w-[22px]" fill="none" stroke="currentColor" strokeWidth="1.4" aria-hidden="true">
              <path d="M2 9 H18 M12 3 L18 9 L12 15 M21 1 V17" />
            </svg>
            20.3 mi
          </span>
          <span className="flex items-center gap-2">
            <svg viewBox="0 0 18 20" className="h-5 w-[18px]" fill="none" stroke="currentColor" strokeWidth="1.6" aria-hidden="true">
              <circle cx="9" cy="12" r="7.4" />
              <path d="M6 1 H12 M9 8 V13 M14 5 L16 3" />
            </svg>
            1 h 29
          </span>
          <span className="flex items-center gap-2">
            <svg viewBox="0 0 17 14" className="h-[14px] w-[17px]" fill="none" stroke="currentColor" strokeWidth="1.5" aria-hidden="true">
              <path d="M8.5 1 L16 13 H1 Z" />
            </svg>
            826 ft
          </span>
          <span className="flex items-center gap-2">
            <svg viewBox="0 0 17 16" className="h-4 w-[17px]" fill="none" stroke="currentColor" strokeWidth="1.5" aria-hidden="true">
              <path d="M13 1 L2 14 H16 M6 5 Q12 8 12 14" />
            </svg>
            – ~7 %
          </span>
          <button type="button" aria-label="More" className="ml-auto pr-[6px]">
            <svg viewBox="0 0 24 6" className="h-[6px] w-6" fill="currentColor" aria-hidden="true">
              <circle cx="3" cy="3" r="2.8" />
              <circle cx="12" cy="3" r="2.8" />
              <circle cx="21" cy="3" r="2.8" />
            </svg>
          </button>
        </div>

        {/* Middle labels sit over the thirds of the ruler */}
        <div className="mt-[35px] grid grid-cols-6 text-center text-base text-[#333]">
          <span className="text-left">Start</span>
          <span className="col-span-2">15.7 mi</span>
          <span className="col-span-2">31.4 mi</span>
          <span className="text-right">62.9 mi</span>
        </div>
        <Ruler />
        <div className="mt-[6px]">
          <ElevationChart />
        </div>
      </div>
    </section>
  )
}

export default function App() {
  return (
    <main className="grid min-h-screen grid-cols-[537fr_524fr] gap-[68px] bg-[#f2f2e6] pt-[17px] pr-[45px] pl-[26px] font-['Noto_Sans_CJK_JP','Noto_Sans',sans-serif]">
      <Planner />
      <TourDetails />
    </main>
  )
}
